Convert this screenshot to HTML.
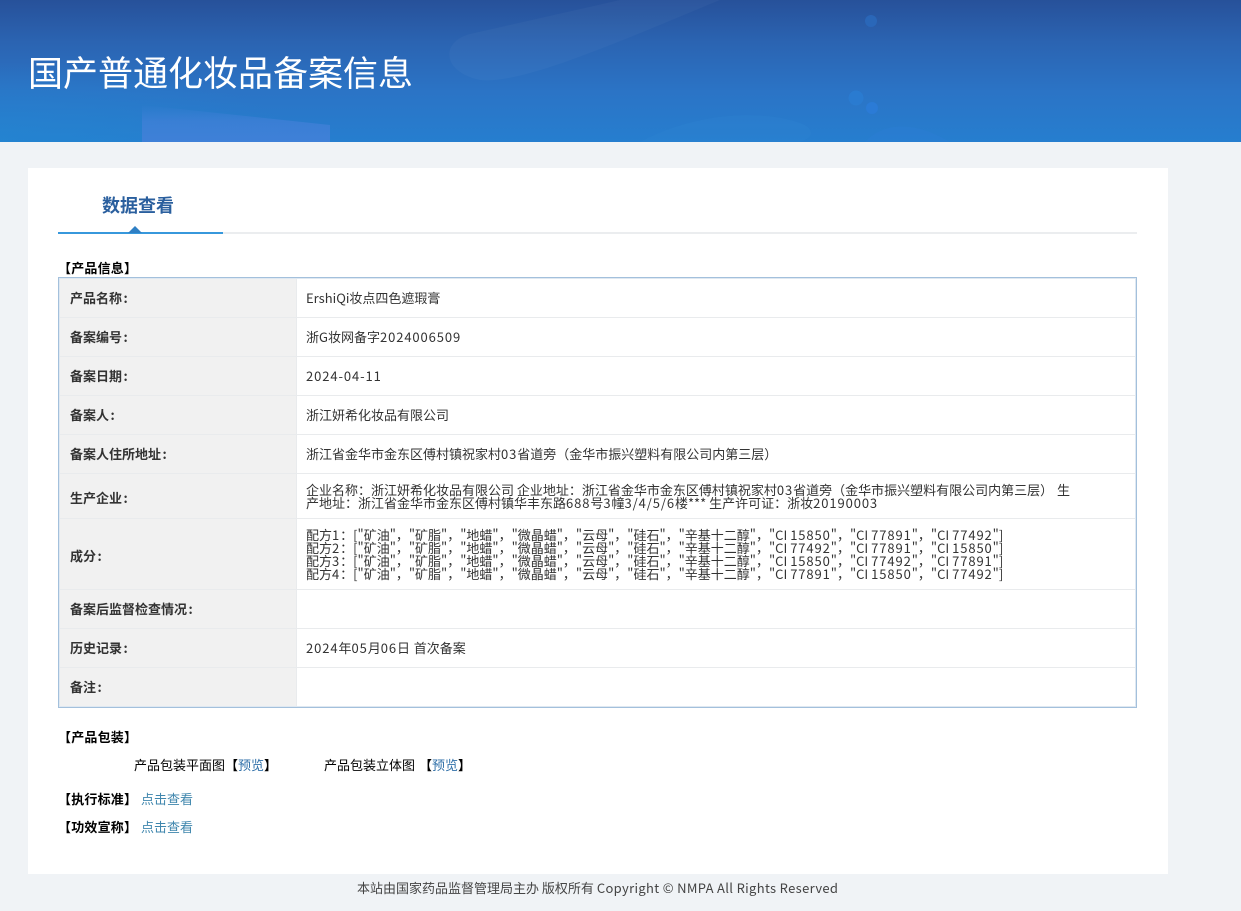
<!DOCTYPE html>
<html lang="zh-CN"><head><meta charset="utf-8"><title>国产普通化妆品备案信息</title>
<style>
html,body{margin:0;padding:0;width:1241px;height:911px;overflow:hidden;background:#f0f3f6}
body{position:relative;font-family:"Noto Sans CJK SC","Liberation Sans",sans-serif;font-size:13px;color:#333}
div,a,svg{position:absolute}
.t{white-space:nowrap;line-height:14px;height:14px}
.l{left:70px;font-weight:700;color:#333}
.v{left:306px}
.k{left:58px;font-weight:700;color:#000;letter-spacing:.2px}
.lnk{color:#3f86ad}
span.b{color:#2f6fa8}
i{font-style:normal;letter-spacing:.9px}
u{text-decoration:none;margin-left:1.5px}
.h{left:59px;width:1077px;height:1px;background:#e9ebed}
</style></head><body>
<svg style="left:0;top:0" width="1241" height="142" viewBox="0 0 1241 142">
<defs>
<linearGradient id="g" x1="0" y1="0" x2="0" y2="1"><stop offset="0" stop-color="#27519a"/><stop offset=".3" stop-color="#2b64b2"/><stop offset=".65" stop-color="#2b74c6"/><stop offset="1" stop-color="#267ecf"/></linearGradient>
<linearGradient id="r" x1="0" y1="0" x2="0" y2="1"><stop offset="0" stop-color="#4280d8" stop-opacity="0"/><stop offset=".45" stop-color="#4280d8" stop-opacity=".7"/><stop offset="1" stop-color="#4080d8" stop-opacity=".95"/></linearGradient>
<radialGradient id="lf" cx="0" cy="1" r="1"><stop offset="0" stop-color="#2288d2" stop-opacity=".55"/><stop offset="1" stop-color="#2288d2" stop-opacity="0"/></radialGradient>
</defs>
<rect width="1241" height="142" fill="url(#g)"/>
<rect y="62" width="300" height="80" fill="url(#lf)"/>
<path d="M142 105L142 142H330V125Z" fill="url(#r)"/>
<path d="M620 0L470 34C440 42 442 72 480 80C520 84 600 50 720 0Z" fill="#fff" opacity=".03"/>
<path d="M640 142C700 110 770 110 805 125C815 132 812 138 800 142Z" fill="#2e85d0" opacity=".35"/>
<path d="M865 142C880 125 910 118 950 142Z" fill="#2f7fd8" opacity=".3"/>
<circle cx="871" cy="21" r="6" fill="#2a68ba" opacity=".9"/>
<circle cx="856" cy="98" r="7.5" fill="#2a7cd0" opacity=".9"/>
<circle cx="872" cy="108" r="6" fill="#2b7bd6"/>
</svg>
<div class="t" style="left:28px;top:46px;font-size:35px;line-height:52px;height:52px;color:#fff">国产普通化妆品备案信息</div>
<div style="left:28px;top:168px;width:1140px;height:706px;background:#fff"></div>
<div class="t" style="left:102px;top:192px;font-size:18px;line-height:26px;height:26px;font-weight:700;color:#2a5f9e">数据查看</div>
<div style="left:58px;top:232px;width:1079px;height:2px;background:#ebedef"></div>
<div style="left:58px;top:232px;width:165px;height:2px;background:#3798dc"></div>
<svg style="left:128px;top:226px" width="14" height="7"><path d="M0 7L7 0L14 7Z" fill="#2f7fc4"/></svg>
<div class="t k" style="top:261px">【产品信息】</div>
<div style="left:59px;top:278px;width:237px;height:428px;background:#f1f1f1"></div>
<div style="left:296px;top:278px;width:1px;height:428px;background:#e9ebed"></div>
<div class="h" style="top:317px"></div><div class="h" style="top:356px"></div><div class="h" style="top:395px"></div><div class="h" style="top:434px"></div><div class="h" style="top:473px"></div><div class="h" style="top:518px"></div><div class="h" style="top:589px"></div><div class="h" style="top:628px"></div><div class="h" style="top:667px"></div>
<div style="left:58px;top:277px;width:1077px;height:429px;border:1px solid #a3c0dc;box-shadow:inset 0 0 0 1px #dfe8f1"></div>

<div class="t l" style="top:291px">产品名称<u>:</u></div>
<div class="t v" style="top:291px">ErshiQi妆点四色遮瑕膏</div>
<div class="t l" style="top:330px">备案编号<u>:</u></div>
<div class="t v" style="top:330px">浙G妆网备字<i>2024006509</i></div>
<div class="t l" style="top:369px">备案日期<u>:</u></div>
<div class="t v" style="top:369px"><i>2024-04-11</i></div>
<div class="t l" style="top:408px">备案人<u>:</u></div>
<div class="t v" style="top:408px">浙江妍希化妆品有限公司</div>
<div class="t l" style="top:447px">备案人住所地址<u>:</u></div>
<div class="t v" style="top:447px">浙江省金华市金东区傅村镇祝家村<i>03</i>省道旁（金华市振兴塑料有限公司内第三层）</div>
<div class="t l" style="top:491px">生产企业<u>:</u></div>
<div class="t v" style="top:483px;line-height:13px">企业名称：浙江妍希化妆品有限公司 企业地址：浙江省金华市金东区傅村镇祝家村<i>03</i>省道旁（金华市振兴塑料有限公司内第三层）<i> </i>生</div>
<div class="t v" style="top:496px;line-height:13px">产地址：浙江省金华市金东区傅村镇华丰东路<i>688</i>号<i>3</i>幢<i>3/4/5/6</i>楼*** 生产许可证：浙妆<i>20190003</i></div>
<div class="t l" style="top:549px">成分<u>:</u></div>
<div class="t v" style="top:528px;line-height:13px">配方<i>1</i>：["矿油"，"矿脂"，"地蜡"，"微晶蜡"，"云母"，"硅石"，"辛基十二醇"，"CI <i>15850</i>"，"CI <i>77891</i>"，"CI <i>77492</i>"]</div>
<div class="t v" style="top:541px;line-height:13px">配方<i>2</i>：["矿油"，"矿脂"，"地蜡"，"微晶蜡"，"云母"，"硅石"，"辛基十二醇"，"CI <i>77492</i>"，"CI <i>77891</i>"，"CI <i>15850</i>"]</div>
<div class="t v" style="top:554px;line-height:13px">配方<i>3</i>：["矿油"，"矿脂"，"地蜡"，"微晶蜡"，"云母"，"硅石"，"辛基十二醇"，"CI <i>15850</i>"，"CI <i>77492</i>"，"CI <i>77891</i>"]</div>
<div class="t v" style="top:567px;line-height:13px">配方<i>4</i>：["矿油"，"矿脂"，"地蜡"，"微晶蜡"，"云母"，"硅石"，"辛基十二醇"，"CI <i>77891</i>"，"CI <i>15850</i>"，"CI <i>77492</i>"]</div>
<div class="t l" style="top:602px">备案后监督检查情况<u>:</u></div>
<div class="t l" style="top:641px">历史记录<u>:</u></div>
<div class="t v" style="top:641px"><i>2024</i>年<i>05</i>月<i>06</i>日<i> </i>首次备案</div>
<div class="t l" style="top:680px">备注<u>:</u></div>

<div class="t k" style="top:730px">【产品包装】</div>
<div class="t" style="left:134px;top:758px;color:#000">产品包装平面图</div>
<div class="t" style="left:225px;top:758px;color:#000;font-weight:700">【</div>
<div class="t" style="left:238px;top:758px"><span class="b">预览</span></div>
<div class="t" style="left:264px;top:758px;color:#000;font-weight:700">】</div>
<div class="t" style="left:324px;top:758px;color:#000">产品包装立体图</div>
<div class="t" style="left:419px;top:758px;color:#000;font-weight:700">【</div>
<div class="t" style="left:432px;top:758px"><span class="b">预览</span></div>
<div class="t" style="left:458px;top:758px;color:#000;font-weight:700">】</div>
<div class="t k" style="top:792px">【执行标准】</div>
<div class="t lnk" style="left:141px;top:792px">点击查看</div>
<div class="t k" style="top:820px">【功效宣称】</div>
<div class="t lnk" style="left:141px;top:820px">点击查看</div>
<div class="t" style="left:357px;top:881px;color:#444">本站由国家药品监督管理局主办 版权所有 <span style="letter-spacing:.33px">Copyright © NMPA All Rights Reserved</span></div>
</body></html>
